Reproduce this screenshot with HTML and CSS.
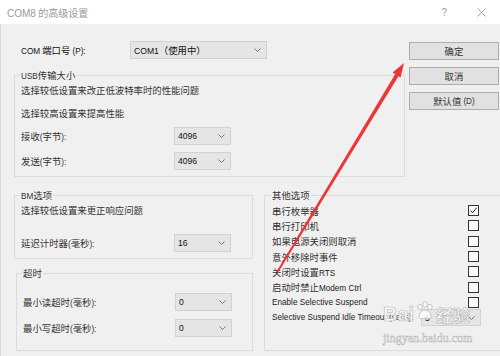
FILE: index.html
```html
<!DOCTYPE html>
<html>
<head>
<meta charset="utf-8">
<link rel="stylesheet" href="styles.css">
</head>
<body>
<div class="window">
  <div class="titlebar">
    <span class="title"><span class="en">COM8</span> 的高级设置</span>
    <span class="help">?</span>
    <svg class="close" viewBox="0 0 9 9"><path d="M0.5 0.5 L8.5 8.5 M8.5 0.5 L0.5 8.5" stroke="#9a9a9a" stroke-width="0.9" fill="none"/></svg>
  </div>
  <div class="content">
    <div class="top">
      <div class="topleft">
        <div class="comrow">
          <span class="comlabel"><span class="en">COM</span> 端口号 <span class="en">(P):</span></span>
          <div class="combo combo-com"><span class="val"><span class="en">COM1</span>（使用中）</span><svg class="chev" viewBox="0 0 7 4"><path d="M0.5 0.5 L3.5 3.5 L6.5 0.5" stroke="#666" fill="none" stroke-width="0.9"/></svg></div>
        </div>
        <div class="group group-usb">
          <div class="legend"><span class="en">USB</span>传输大小</div>
          <div class="line">选择较低设置来改正低波特率时的性能问题</div>
          <div class="line mt7">选择较高设置来提高性能</div>
          <div class="field mt6"><span>接收<span class="en">(</span>字节<span class="en">):</span></span><div class="combo combo-sm"><span class="val en">4096</span><svg class="chev" viewBox="0 0 7 4"><path d="M0.5 0.5 L3.5 3.5 L6.5 0.5" stroke="#666" fill="none" stroke-width="0.9"/></svg></div></div>
          <div class="field mt7"><span>发送<span class="en">(</span>字节<span class="en">):</span></span><div class="combo combo-sm"><span class="val en">4096</span><svg class="chev" viewBox="0 0 7 4"><path d="M0.5 0.5 L3.5 3.5 L6.5 0.5" stroke="#666" fill="none" stroke-width="0.9"/></svg></div></div>
        </div>
      </div>
      <div class="buttons">
        <div class="btn">确定</div>
        <div class="btn">取消</div>
        <div class="btn">默认值 <span class="en">(D)</span></div>
      </div>
    </div>
    <div class="bottom">
      <div class="bottomleft">
        <div class="group group-bm">
          <div class="legend"><span class="en">BM</span>选项</div>
          <div class="line">选择较低设置来更正响应问题</div>
          <div class="field mt16"><span>延迟计时器<span class="en">(</span>毫秒<span class="en">):</span></span><div class="combo combo-sm"><span class="val en">16</span><svg class="chev" viewBox="0 0 7 4"><path d="M0.5 0.5 L3.5 3.5 L6.5 0.5" stroke="#666" fill="none" stroke-width="0.9"/></svg></div></div>
        </div>
        <div class="group group-to">
          <div class="legend">超时</div>
          <div class="field field-to mt13"><span>最小读超时<span class="en">(</span>毫秒<span class="en">):</span></span><div class="combo combo-sm"><span class="val en">0</span><svg class="chev" viewBox="0 0 7 4"><path d="M0.5 0.5 L3.5 3.5 L6.5 0.5" stroke="#666" fill="none" stroke-width="0.9"/></svg></div></div>
          <div class="field field-to mt8"><span>最小写超时<span class="en">(</span>毫秒<span class="en">):</span></span><div class="combo combo-sm"><span class="val en">0</span><svg class="chev" viewBox="0 0 7 4"><path d="M0.5 0.5 L3.5 3.5 L6.5 0.5" stroke="#666" fill="none" stroke-width="0.9"/></svg></div></div>
        </div>
      </div>
      <div class="group group-other">
        <div class="legend">其他选项</div>
        <div class="opts">
          <div class="opt"><span>串行枚举器</span><span class="cb"><svg viewBox="0 0 9 9"><path d="M1.5 4.5 L3.6 6.8 L7.6 1.8" stroke="#333" stroke-width="1" fill="none"/></svg></span></div>
          <div class="opt"><span>串行打印机</span><span class="cb"></span></div>
          <div class="opt"><span>如果电源关闭则取消</span><span class="cb"></span></div>
          <div class="opt"><span>意外移除时事件</span><span class="cb"></span></div>
          <div class="opt"><span>关闭时设置<span class="en">RTS</span></span><span class="cb"></span></div>
          <div class="opt"><span>启动时禁止<span class="en">Modem Ctrl</span></span><span class="cb"></span></div>
          <div class="opt"><span class="en">Enable Selective Suspend</span><span class="cb"></span></div>
          <div class="opt opt-last"><span class="en">Selective Suspend Idle Timeout (secs):</span><div class="combo combo-tiny"><span class="val en">5</span><svg class="chev" viewBox="0 0 7 4"><path d="M0.5 0.5 L3.5 3.5 L6.5 0.5" stroke="#666" fill="none" stroke-width="0.9"/></svg></div></div>
        </div>
      </div>
    </div>
  </div>
  <svg class="arrow" viewBox="0 0 500 356">
    <polygon points="395.4,73.8 398.6,75.9 278.2,272.4 276.6,271.6" fill="#ee3535"/>
    <polygon points="404,63 392.6,72.4 400.6,77.6" fill="#ee3535"/>
  </svg>
  <div class="watermark">
    <div class="wm-top"><span class="wm-bai">Bai</span><svg class="paw" viewBox="0 0 20 20"><g fill="rgba(255,255,255,0.85)" stroke="#b8b8b8" stroke-width="0.8"><ellipse cx="5" cy="6" rx="2.2" ry="2.8"/><ellipse cx="10" cy="3.5" rx="2.2" ry="2.8"/><ellipse cx="15" cy="6" rx="2.2" ry="2.8"/><path d="M4 16 C4 11 8 9 10 9 C12 9 16 11 16 16 C16 18 13 18 10 17 C7 18 4 18 4 16 Z"/></g></svg><span class="wm-jy">经验</span></div>
    <div class="wm-url">jingyan.baidu.com</div>
  </div>
</div>
</body>
</html>
```
FILE: styles.css
```css
* { box-sizing: border-box; }
html, body { margin: 0; padding: 0; }
body {
  width: 500px;
  height: 356px;
  overflow: hidden;
  font-family: "Noto Sans CJK SC", sans-serif;
  font-size: 9.4px;
  color: #333;
  background: #f0f0f0;
}
.en { font-family: "Liberation Sans", Arial, sans-serif; font-size: 8.2px; }
.window {
  position: relative;
  width: 500px;
  height: 356px;
  overflow: hidden;
  background: #f0f0f0;
}
.titlebar {
  height: 24px;
  background: #fff;
  display: flex;
  align-items: center;
  padding-left: 7px;
}
.title { flex: 1; font-size: 10px; color: #9a9a9a; }
.title .en { font-size: 10px; }
.help {
  font-family: "Liberation Sans", sans-serif;
  font-size: 10px;
  color: #a0a0a0;
  margin-right: 30px;
}
.close { width: 9px; height: 9px; margin-right: 14px; }
.content {
  height: 332px;
  border-left: 1px solid #d8d8d8;
  padding: 17px 1px 0 13px;
}
.top {
  display: grid;
  grid-template-columns: 391px 90px;
  column-gap: 4px;
}
.comrow { display: flex; align-items: center; height: 18px; }
.comlabel { width: 116px; padding-left: 7px; color: #111; }
.combo {
  height: 18px;
  background: #e5e5e5;
  border: 1px solid #d2d2d2;
  display: flex;
  align-items: center;
  justify-content: space-between;
  padding: 0 5px 0 3px;
  color: #111;
}
.combo .val.en, .combo .val .en { font-size: 8.6px; }
.chev { width: 7px; height: 4px; }
.combo-com { width: 137px; }
.combo-sm { width: 57px; }
.combo-tiny { width: 60px; height: 17px; }
.group {
  border: 1px solid #dcdcdc;
  padding: 0 6px;
}
.legend {
  width: max-content;
  height: 14px;
  line-height: 14px;
  margin-top: -8px;
  margin-left: -1px;
  padding: 0 1px;
  background: #f0f0f0;
  color: #333;
}
.line { height: 16px; line-height: 16px; }
.field {
  display: grid;
  grid-template-columns: 153px 57px;
  align-items: center;
  height: 18px;
}
.field-to { grid-template-columns: 152px 57px; }
.mt6 { margin-top: 6px; }
.mt7 { margin-top: 7px; }
.mt8 { margin-top: 8px; }
.mt13 { margin-top: 13px; }
.mt16 { margin-top: 16px; }
.group-usb { margin-top: 16px; padding-bottom: 6px; }
.buttons {
  display: flex;
  flex-direction: column;
  gap: 7px;
  padding-top: 1px;
}
.btn {
  height: 18px;
  background: #e1e1e1;
  border: 1px solid #adadad;
  display: flex;
  align-items: center;
  justify-content: center;
  gap: 2px;
  color: #333;
}
.bottom {
  display: grid;
  grid-template-columns: 239px 1fr;
  column-gap: 11px;
  margin-top: 18px;
}
.group-bm { padding-bottom: 6px; }
.group-to { margin-top: 14px; margin-left: 2px; padding-bottom: 13px; }
.group-other { margin-right: -6px; padding: 0 7px; }
.opts { padding-top: 1px; }
.opt {
  width: 207px;
  height: 15.3px;
  display: flex;
  align-items: center;
  justify-content: space-between;
  white-space: nowrap;
}
.opt-last { width: 209px; }
.opt .en { font-size: 8.2px; color: #222; }
.cb {
  width: 11px;
  height: 11px;
  border: 1px solid #333;
  background: #fafafa;
  display: flex;
}
.cb svg { width: 9px; height: 9px; }
.arrow {
  position: absolute;
  left: 0;
  top: 0;
  width: 500px;
  height: 356px;
  pointer-events: none;
}
.watermark {
  position: absolute;
  left: 383px;
  top: 299px;
  pointer-events: none;
  color: rgba(255, 255, 255, 0.85);
}
.wm-top { display: flex; align-items: center; height: 30px; }
.wm-bai {
  font-family: "Liberation Sans", sans-serif;
  font-size: 20px;
  font-weight: bold;
  -webkit-text-stroke: 0.6px #b5b5b5;
}
.paw { width: 20px; height: 20px; margin: -6px 1px 0 1px; }
.wm-jy {
  font-family: "Noto Sans CJK SC", sans-serif;
  font-size: 17px;
  font-weight: bold;
  -webkit-text-stroke: 0.6px #b5b5b5;
}
.wm-url {
  font-family: "Liberation Serif", serif;
  font-size: 12px;
  margin-top: 2px;
  -webkit-text-stroke: 0.5px #b5b5b5;
}
```
